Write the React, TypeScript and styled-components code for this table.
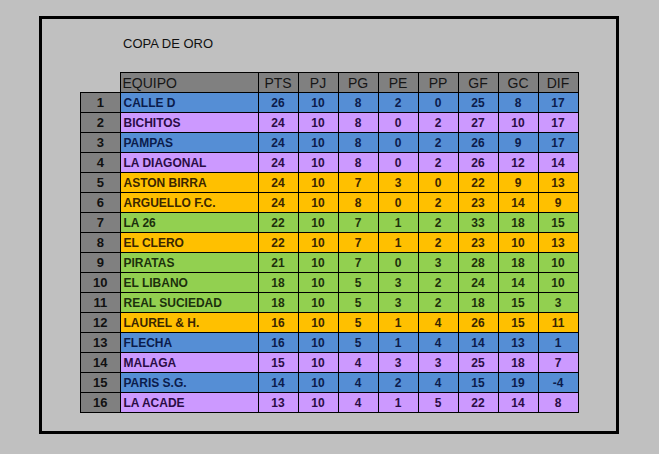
import React from "react";
import styled, { createGlobalStyle } from "styled-components";

type Tone = "blue" | "purple" | "orange" | "green";

const tones: Record<Tone, { bg: string; fg: string }> = {
  blue: { bg: "#558ed5", fg: "#0b1c4c" },
  purple: { bg: "#cc99ff", fg: "#2a0c44" },
  orange: { bg: "#ffc000", fg: "#3a2600" },
  green: { bg: "#92d050", fg: "#1c300c" },
};

const GlobalStyle = createGlobalStyle`
  html, body {
    margin: 0;
    background: #c0c0c0;
    font-family: "Liberation Sans", Arial, sans-serif;
  }
`;

const Frame = styled.div`
  box-sizing: border-box;
  margin: 16px 0 0 39px;
  width: 580px;
  height: 418px;
  border: 3px solid #000;
  padding: 17px 0 0 38px;
`;

const Title = styled.div`
  margin-left: 43px;
  font-size: 13px;
  line-height: 15px;
  color: #111;
  height: 36px;
`;

const Table = styled.table`
  border-collapse: collapse;
  table-layout: fixed;
`;

const HeadCell = styled.th<{ $w: number; $left?: boolean }>`
  width: ${(p) => p.$w}px;
  height: 19px;
  padding: 0 0 0 ${(p) => (p.$left ? "2px" : "0")};
  border: 1px solid #000;
  background: #808080;
  color: #161616;
  font-weight: normal;
  font-size: 14px;
  line-height: 18px;
  text-align: ${(p) => (p.$left ? "left" : "center")};
`;

const Blank = styled.th`
  width: 39px;
  border: none;
  padding: 0;
`;

const Row = styled.tr<{ $tone: Tone }>`
  height: 20px;
  background: ${(p) => tones[p.$tone].bg};
  color: ${(p) => tones[p.$tone].fg};
`;

const PosCell = styled.td`
  border: 1px solid #000;
  background: #808080;
  color: #111;
  padding: 0;
  font-size: 13px;
  font-weight: bold;
  line-height: 18px;
  text-align: center;
`;

const TeamCell = styled.td`
  border: 1px solid #000;
  padding: 0 0 0 3px;
  font-size: 12px;
  font-weight: bold;
  line-height: 18px;
  text-align: left;
  white-space: nowrap;
`;

const NumCell = styled.td`
  border: 1px solid #000;
  padding: 0;
  font-size: 12px;
  font-weight: bold;
  line-height: 18px;
  text-align: center;
`;

const columns = ["PTS", "PJ", "PG", "PE", "PP", "GF", "GC", "DIF"];

const teams: { name: string; tone: Tone; stats: number[] }[] = [
  { name: "CALLE D", tone: "blue", stats: [26, 10, 8, 2, 0, 25, 8, 17] },
  { name: "BICHITOS", tone: "purple", stats: [24, 10, 8, 0, 2, 27, 10, 17] },
  { name: "PAMPAS", tone: "blue", stats: [24, 10, 8, 0, 2, 26, 9, 17] },
  { name: "LA DIAGONAL", tone: "purple", stats: [24, 10, 8, 0, 2, 26, 12, 14] },
  { name: "ASTON BIRRA", tone: "orange", stats: [24, 10, 7, 3, 0, 22, 9, 13] },
  { name: "ARGUELLO F.C.", tone: "orange", stats: [24, 10, 8, 0, 2, 23, 14, 9] },
  { name: "LA 26", tone: "green", stats: [22, 10, 7, 1, 2, 33, 18, 15] },
  { name: "EL CLERO", tone: "orange", stats: [22, 10, 7, 1, 2, 23, 10, 13] },
  { name: "PIRATAS", tone: "green", stats: [21, 10, 7, 0, 3, 28, 18, 10] },
  { name: "EL LIBANO", tone: "green", stats: [18, 10, 5, 3, 2, 24, 14, 10] },
  { name: "REAL SUCIEDAD", tone: "green", stats: [18, 10, 5, 3, 2, 18, 15, 3] },
  { name: "LAUREL & H.", tone: "orange", stats: [16, 10, 5, 1, 4, 26, 15, 11] },
  { name: "FLECHA", tone: "blue", stats: [16, 10, 5, 1, 4, 14, 13, 1] },
  { name: "MALAGA", tone: "purple", stats: [15, 10, 4, 3, 3, 25, 18, 7] },
  { name: "PARIS S.G.", tone: "blue", stats: [14, 10, 4, 2, 4, 15, 19, -4] },
  { name: "LA ACADE", tone: "purple", stats: [13, 10, 4, 1, 5, 22, 14, 8] },
];

export default function App() {
  return (
    <>
      <GlobalStyle />
      <Frame>
        <Title>COPA DE ORO</Title>
        <Table>
          <thead>
            <tr>
              <Blank />
              <HeadCell $w={135} $left>
                EQUIPO
              </HeadCell>
              {columns.map((c) => (
                <HeadCell key={c} $w={39}>
                  {c}
                </HeadCell>
              ))}
            </tr>
          </thead>
          <tbody>
            {teams.map((t, i) => (
              <Row key={t.name} $tone={t.tone}>
                <PosCell>{i + 1}</PosCell>
                <TeamCell>{t.name}</TeamCell>
                {t.stats.map((s, j) => (
                  <NumCell key={j}>{s}</NumCell>
                ))}
              </Row>
            ))}
          </tbody>
        </Table>
      </Frame>
    </>
  );
}
